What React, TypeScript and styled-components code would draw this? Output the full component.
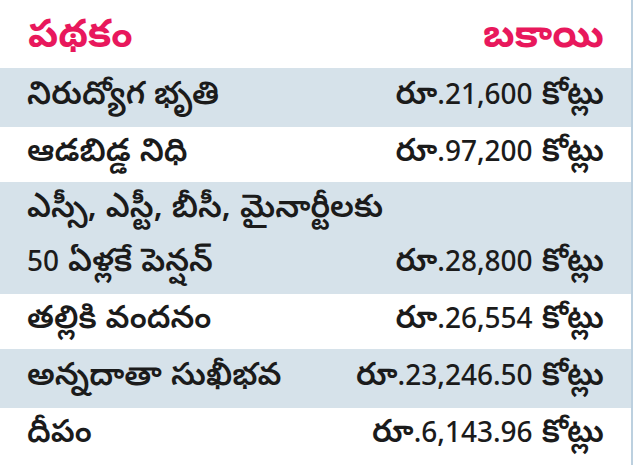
import React from 'react';
import styled, { createGlobalStyle } from 'styled-components';

const GlobalStyle = createGlobalStyle`
  html, body {
    margin: 0;
    padding: 0;
    background: #ffffff;
  }
  body {
    font-family: 'Noto Sans Telugu', 'Noto Sans', sans-serif;
  }
`;

interface IRow {
  scheme: string[];
  amount: string;
}

const rows: IRow[] = [
  { scheme: ['నిరుద్యోగ భృతి'], amount: '21,600' },
  { scheme: ['ఆడబిడ్డ నిధి'], amount: '97,200' },
  { scheme: ['ఎస్సీ, ఎస్టీ, బీసీ, మైనార్టీలకు', '50 ఏళ్లకే పెన్షన్'], amount: '28,800' },
  { scheme: ['తల్లికి వందనం'], amount: '26,554' },
  { scheme: ['అన్నదాతా సుఖీభవ'], amount: '23,246.50' },
  { scheme: ['దీపం'], amount: '6,143.96' },
];

// digits in the source font run smaller than the telugu letters
const withNumbers = (text: string) =>
  text.split(/(\d[\d,.]*)/).map((part, i) => (/^\d/.test(part) ? <Num key={i}>{part}</Num> : part));

const App = () => {
  return (
    <>
      <GlobalStyle />
      <Frame>
        <Table>
          <Header>
            <span>పథకం</span>
            <span>బకాయి</span>
          </Header>
          {rows.map((row, i) => (
            <Row key={i} $shaded={i % 2 === 0} $lineHeight={row.scheme.length > 1 ? 54 : 55}>
              <Scheme>
                {row.scheme.map((line) => (
                  <div key={line}>{withNumbers(line)}</div>
                ))}
              </Scheme>
              <Amount>
                రూ<Num>.{row.amount}</Num> కోట్లు
              </Amount>
            </Row>
          ))}
        </Table>
      </Frame>
    </>
  );
};

export default App;

const Frame = styled.div`
  width: 635px;
  height: 465px;
  overflow: hidden;
  display: flex;
  background: #ffffff;
`;

const Table = styled.div`
  width: 631px;
  display: flex;
  flex-direction: column;
  border-right: 2px solid #bcd0df;
  color: #1b1b1b;
  & > * {
    flex-shrink: 0;
  }
`;

const Header = styled.div`
  height: 68px;
  display: flex;
  align-items: center;
  justify-content: space-between;
  padding: 10px 27px 0 28px;
  box-sizing: border-box;
  font-size: 39px;
  font-weight: 700;
  line-height: 1;
  color: #e8185c;
`;

const Row = styled.div<{ $shaded: boolean; $lineHeight: number }>`
  display: flex;
  align-items: flex-end;
  justify-content: space-between;
  padding: ${(props) => (props.$shaded ? '2px' : '0')} 27px;
  background-color: ${(props) => (props.$shaded ? '#d6e2ea' : 'transparent')};
  font-size: 32px;
  font-weight: 600;
  line-height: ${(props) => props.$lineHeight}px;
  white-space: nowrap;
`;

const Scheme = styled.div`
  display: flex;
  flex-direction: column;
`;

const Amount = styled.div`
  text-align: right;
`;

const Num = styled.span`
  font-family: 'Noto Sans', sans-serif;
  font-size: 28px;
  font-weight: 500;
  line-height: 1;
`;
